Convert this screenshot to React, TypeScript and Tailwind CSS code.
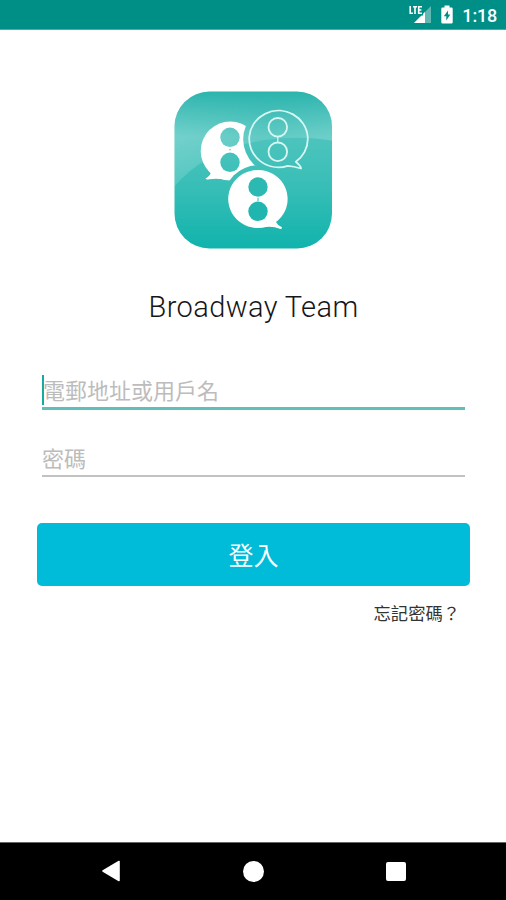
import React, { useState } from 'react';

const StatusBar: React.FC = () => (
  <header className="h-[30px] shrink-0 bg-[#008f86] border-b border-[#4fa9a3] flex items-center justify-end pr-[9px] text-white">
    <svg className="w-[23px] h-[19px]" viewBox="0 0 23 19">
      {/* Signal strength */}
      <path d="M5 18L22 1V18Z" fill="#5fb8b2" />
      <path d="M5 18L16 7V18Z" fill="#fff" />
      <rect x="0" y="0" width="14" height="10.5" fill="#008f86" />
      <path d="M1.2 1V8.2H4M4 1.7H8M6 1.7V9M13 1.7H9.7V8.2H13M9.7 5H12.4" fill="none" stroke="#fff" strokeWidth="1.6" />
    </svg>
    <svg className="w-[12px] h-[19px] ml-[9px]" viewBox="0 0 12 19">
      <path d="M3.5 0.5H8.5V2.5H10.5Q11.7 2.5 11.7 3.7V17.3Q11.7 18.5 10.5 18.5H1.5Q0.3 18.5 0.3 17.3V3.7Q0.3 2.5 1.5 2.5H3.5Z" fill="#fff" />
      <path d="M7 5.5L2.8 11.3H5.3V15.5L9.3 9.5H7Z" fill="#008f86" />
    </svg>
    <span className="ml-[9px] text-[18px] leading-[20px] font-medium tracking-[-0.2px] pt-[2px]">1:18</span>
  </header>
);

const Logo: React.FC = () => (
  <svg className="w-[160px] h-[160px]" viewBox="173 90 160 160">
    <defs>
      <linearGradient id="base" x1="0" y1="0" x2="0" y2="1">
        <stop offset="0" stopColor="#27b3ac" />
        <stop offset="0.3" stopColor="#4dc4bd" />
        <stop offset="0.6" stopColor="#38beb7" />
        <stop offset="1" stopColor="#0fb3ac" />
      </linearGradient>
      <linearGradient id="gloss" x1="0" y1="91" x2="0" y2="190" gradientUnits="userSpaceOnUse">
        <stop offset="0" stopColor="#fff" stopOpacity="0.02" />
        <stop offset="0.45" stopColor="#fff" stopOpacity="0.22" />
        <stop offset="1" stopColor="#fff" stopOpacity="0.14" />
      </linearGradient>
      <linearGradient id="fade" x1="174" y1="0" x2="333" y2="0" gradientUnits="userSpaceOnUse">
        <stop offset="0" stopColor="#fff" />
        <stop offset="0.6" stopColor="#888" />
        <stop offset="1" stopColor="#ddd" />
      </linearGradient>
      <mask id="glossMask">
        <rect x="174" y="90" width="160" height="160" fill="url(#fade)" />
      </mask>
      <clipPath id="tile">
        <rect x="174.5" y="91.5" width="157.5" height="157" rx="35" />
      </clipPath>
      <mask id="leftCut">
        <rect x="174" y="90" width="160" height="160" fill="#fff" />
        <circle cx="278" cy="139.3" r="34.8" fill="#000" />
        <circle cx="258" cy="199.5" r="34.2" fill="#000" />
        <circle cx="230" cy="137.3" r="9.7" fill="#000" />
        <circle cx="230" cy="162.3" r="9.7" fill="#000" />
      </mask>
    </defs>
    <g clipPath="url(#tile)">
      <rect x="174" y="90" width="160" height="160" fill="url(#base)" />
      <path d="M174 90H334V141Q303 135 265 140Q206 149 174 187Z" fill="url(#gloss)" mask="url(#glossMask)" />
    </g>
    <g mask="url(#leftCut)" fill="#fff">
      <circle cx="230.3" cy="151" r="29.6" />
      <path d="M211 171Q211 176 205.5 178.5Q206 180 209 179.3Q216 178.3 225 179.5Z" />
    </g>
    <circle cx="230" cy="149.8" r="0.8" fill="#58c5bf" />
    <g fill="none" stroke="#d8f7f3" strokeWidth="1.8">
      <path d="M295.8 161.8A29.3 28.3 0 1 0 287.8 165.8Q294 166.2 301 168.5Q301.3 166.5 295.8 161.8Z" strokeLinejoin="round" />
      <circle cx="277.8" cy="127.3" r="9.3" />
      <circle cx="277.8" cy="151.8" r="9.3" />
      <path d="M277.8 137V142" strokeWidth="1.2" />
    </g>
    <path d="M276 222A29.7 29 0 1 0 266 226.9Q273 226 280.5 229Q282.7 228.5 281.5 227Q277 224.5 276 222Z" fill="#fff" />
    <circle cx="258" cy="187" r="9.7" fill="#2cb9b2" />
    <circle cx="258" cy="211.3" r="9.7" fill="#20b6af" />
    <path d="M258 197.7V201" stroke="#2cb9b2" />
  </svg>
);

const NavigationBar: React.FC = () => (
  <nav className="h-[58px] shrink-0 bg-black border-t border-[#666] flex items-center justify-between pl-[101px] pr-[100px] pb-px">
    <button aria-label="Back">
      <svg className="w-[20px] h-[22px]" viewBox="0 0 20 22">
        <path d="M18 1.5V20.5L2 11Z" fill="#fff" stroke="#fff" strokeWidth="1.6" strokeLinejoin="round" />
      </svg>
    </button>
    <button aria-label="Home" className="w-[21px] h-[21px] rounded-full bg-white" />
    <button aria-label="Recent" className="w-[20px] h-[19px] rounded-[2px] bg-white" />
  </nav>
);

const App: React.FC = () => {
  const [username, setUsername] = useState('');
  const [password, setPassword] = useState('');

  return (
    <div className="w-full h-[900px] flex flex-col bg-white font-['Roboto','Noto_Sans_CJK_TC',sans-serif]">
      <StatusBar />

      <main className="flex-1 flex flex-col items-center pt-[60px]">
        <Logo />
        <h1 className="mt-[36px] pl-px text-[29px] leading-[42px] font-light tracking-[0.4px] text-[#161616] whitespace-nowrap">
          Broadway Team
        </h1>

        <form className="w-full pl-[37px] pr-[36px] mt-[46px] flex flex-col" onSubmit={(e) => e.preventDefault()}>
          <div className="ml-[5px] mr-[5px] h-[36px] border-b-3 border-[#5fc0b9] flex items-start">
            {/* Text cursor */}
            <span className="w-[2px] h-[30px] mt-px shrink-0 bg-[#16aaa1]" />
            <input
              className="flex-1 min-w-0 h-[33px] pt-[2px] -ml-px text-[22px] leading-[30px] outline-none placeholder:text-[#bcbcbc]"
              placeholder="電郵地址或用戶名"
              value={username}
              onChange={(e) => setUsername(e.target.value)}
            />
          </div>
          <div className="ml-[5px] mr-[5px] mt-[31px] h-[36px] border-b-2 border-[#c2c2c2]">
            <input
              type="password"
              className="block w-full h-[34px] pt-[2px] text-[22px] leading-[32px] outline-none placeholder:text-[#bcbcbc]"
              placeholder="密碼"
              value={password}
              onChange={(e) => setPassword(e.target.value)}
            />
          </div>
          <button className="mt-[46px] h-[63px] pt-[4px] rounded-[5px] bg-[#00bcd9] text-white text-[25px] leading-[36px]">
            登入
          </button>
          <a className="self-end mr-[10px] mt-[15px] text-[17.3px] leading-[26px] text-[#333]">忘記密碼？</a>
        </form>
      </main>

      <NavigationBar />
    </div>
  );
};

export default App;
